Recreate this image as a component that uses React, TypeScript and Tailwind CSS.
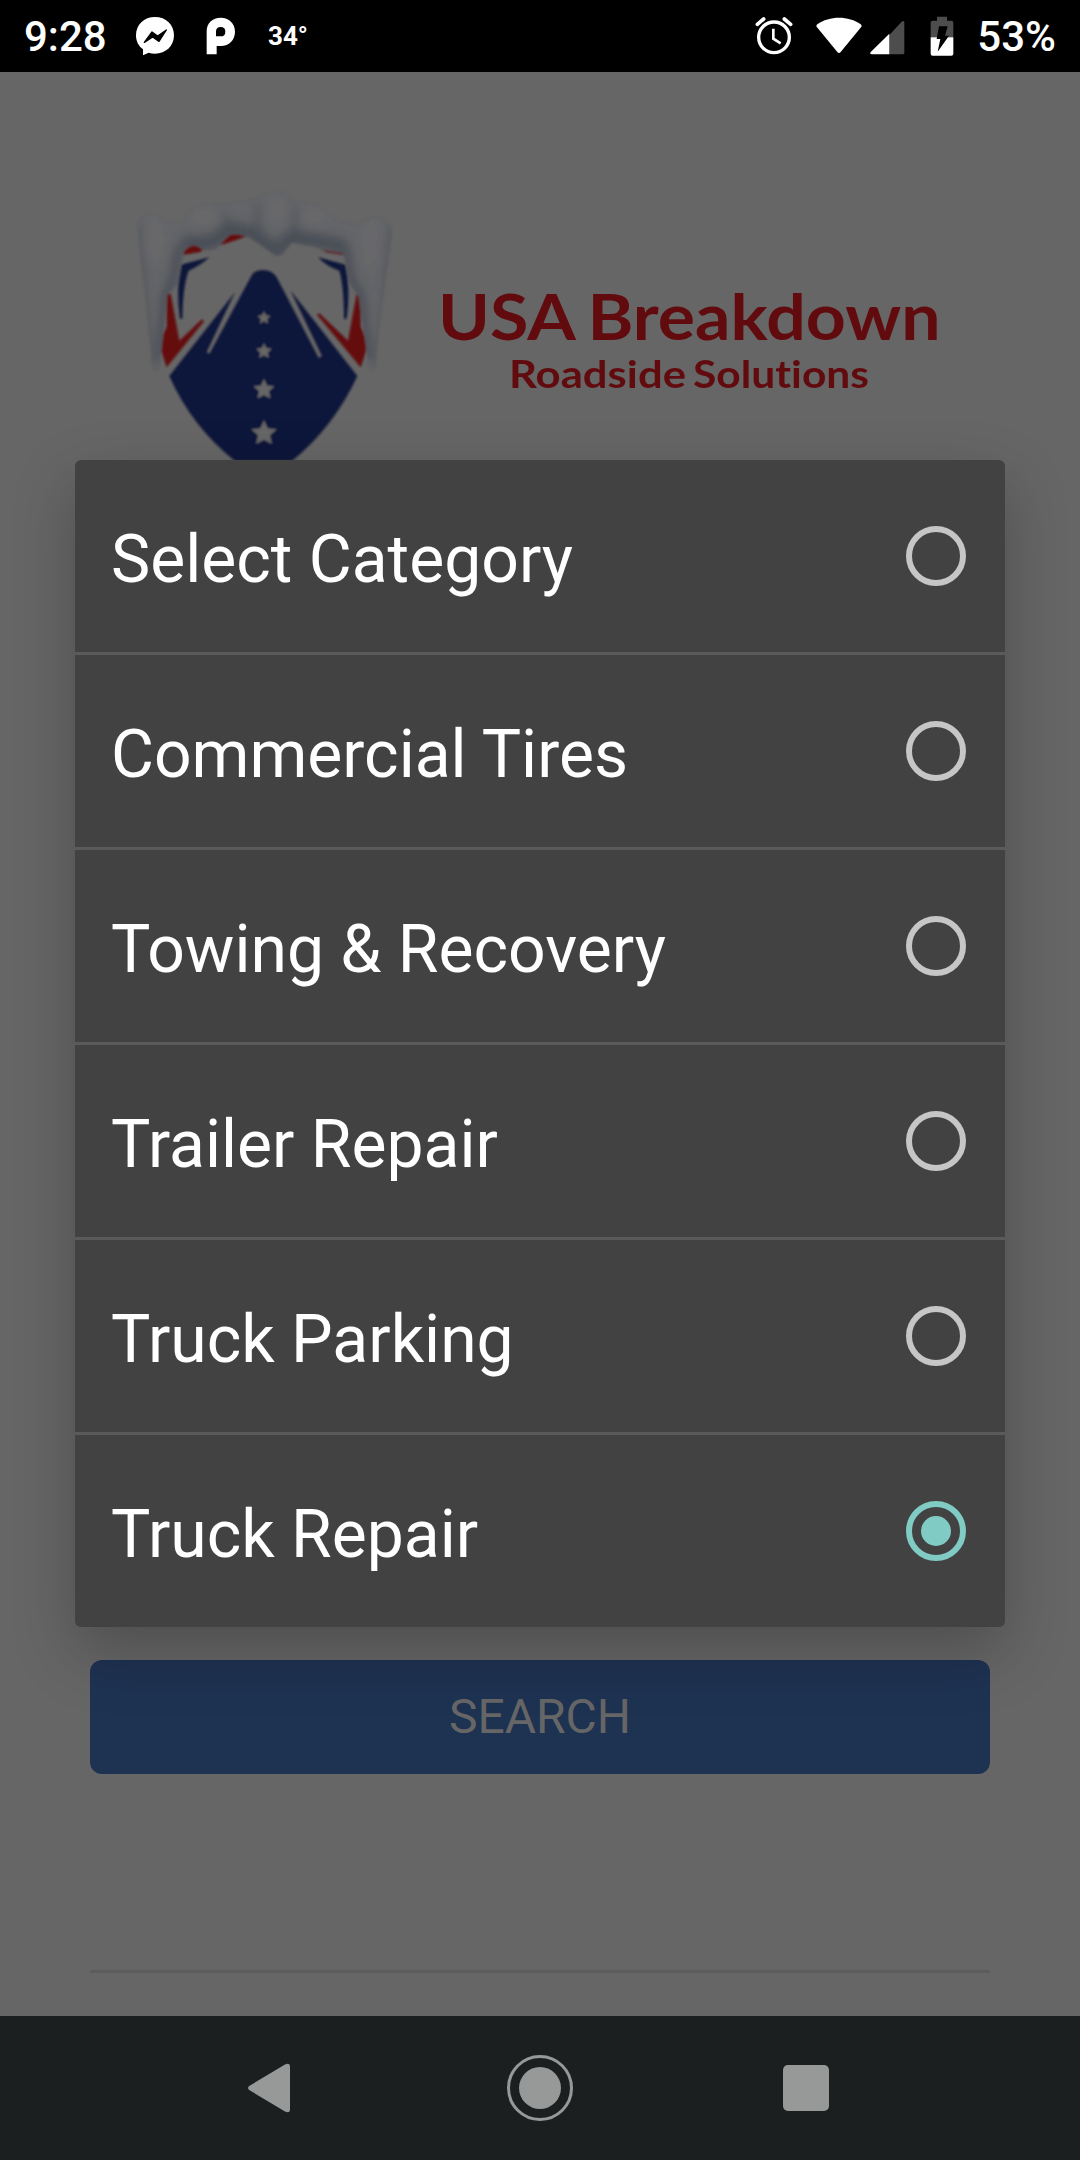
import React from "react";

const ROBOTO = "font-['Roboto',sans-serif]";

const options = [
  { label: "Select Category", selected: false },
  { label: "Commercial Tires", selected: false },
  { label: "Towing & Recovery", selected: false },
  { label: "Trailer Repair", selected: false },
  { label: "Truck Parking", selected: false },
  { label: "Truck Repair", selected: true },
];

function MessengerIcon() {
  return (
    <svg width="40" height="40" viewBox="0 0 120 120" fill="none">
      <path d="M60 3C27 3 3 26 3 58c0 18 8 33 21 42v18l17-8c6 2 12 3 19 3 33 0 57-23 57-55S93 3 60 3Z" fill="#fff" />
      <path d="M28 79 L51 48 L68 60 L94 42 L72 76 L53 63 Z" fill="#000" stroke="#000" strokeWidth="4" strokeLinejoin="round" />
    </svg>
  );
}

function PandoraIcon() {
  return (
    <svg width="30" height="38" viewBox="0 0 90 114" fill="none">
      <path fillRule="evenodd" d="M2 112V43C2 18 19 2 44 2s43 17 43 42-18 43-42 43H32v25ZM30 44q0-14 14-14t14 14-14 14H30Z" fill="#fff" />
    </svg>
  );
}

function AlarmIcon() {
  return (
    <svg width="38" height="38" viewBox="0 0 114 114" fill="none" stroke="#fff">
      <circle cx="57" cy="61" r="46" strokeWidth="10" />
      <path d="M7 22 26 6M107 22 88 6" strokeWidth="11" strokeLinecap="round" />
      <path d="M55 35v30l22 14" strokeWidth="8" />
    </svg>
  );
}

function WifiIcon() {
  return (
    <svg width="46" height="37" viewBox="0 0 138 111">
      <path d="M4 22C40-4 98-4 134 22q5 4 1 9L74 105q-5 6-10 0L3 31q-4-5 1-9Z" fill="#fff" />
    </svg>
  );
}

function SignalIcon() {
  return (
    <svg width="35" height="35" viewBox="0 0 105 105">
      <path d="M58 45 95 5q8-6 8 4v89q0 5-5 5H58Z" fill="#4d4d4d" />
      <path d="M58 41v62H6q-9-1-3-8Z" fill="#fff" />
    </svg>
  );
}

function BatteryIcon() {
  return (
    <svg width="24" height="40" viewBox="0 0 72 120">
      <path d="M21 2h30v12h13q6 0 6 6v44H2V20q0-6 6-6h13Z" fill="#4d4d4d" />
      <path d="M2 64h68v49q0 6-6 6H8q-6 0-6-6Z" fill="#fff" />
      <path d="M27 31h26l-8 28h12L23 107l8-38H20Z" fill="#000" />
    </svg>
  );
}

function StatusBar() {
  return (
    <header className="flex h-[72px] w-full items-center justify-between bg-black pl-6 pr-[24px] text-white">
      <div className="flex items-center">
        <span className="w-[82px] whitespace-nowrap pt-[2px] text-[42px] font-medium leading-[72px]">9:28</span>
        <div className="ml-[29px]"><MessengerIcon /></div>
        <div className="ml-[31px]"><PandoraIcon /></div>
        <span className="ml-[32px] whitespace-nowrap text-[26px] font-bold leading-[72px]">34°</span>
      </div>
      <div className="flex items-center">
        <AlarmIcon />
        <div className="ml-[23px] pb-[2px]"><WifiIcon /></div>
        <div className="ml-[8px] pt-[2px]"><SignalIcon /></div>
        <div className="ml-[25px] pb-[1px]"><BatteryIcon /></div>
        <span className="ml-[23px] whitespace-nowrap pt-[2px] text-[42px] font-medium leading-[72px]">53%</span>
      </div>
    </header>
  );
}

function Star({ cx, cy, r }: { cx: number; cy: number; r: number }) {
  const points = Array.from({ length: 10 }, (_, i) => {
    const radius = i % 2 ? r * 0.48 : r;
    const a = -Math.PI / 2 + (i * Math.PI) / 5;
    return `${cx + radius * Math.cos(a)},${cy + radius * Math.sin(a)}`;
  }).join(" ");
  return <polygon points={points} fill="#666" />;
}

const ICE =
  "M82 165Q86 138 124 131 150 134 166 150L214 160Q236 112 290 102 312 98 334 106 352 92 400 94L444 84Q462 66 500 66 536 66 556 98 574 88 600 100 640 108 660 138 690 152 728 166L752 158Q776 138 812 142 848 152 845 190L826 330 806 480 796 596Q786 606 776 596L764 500 746 380 718 340 700 250 640 240 610 230 545 218 520 250Q504 266 486 250L420 204Q392 190 360 194 340 212 322 234 300 246 276 238 250 212 222 244L205 340 172 376 160 490 148 596Q138 608 128 596L108 400 92 260Z";

function ShieldLogo() {
  return (
    <svg className="block shrink-0" width="310" height="300" viewBox="0 0 930 900">
      <defs>
        <filter id="soft" x="-5%" y="-5%" width="110%" height="110%">
          <feGaussianBlur stdDeviation="2.6" />
        </filter>
        <filter id="shade" filterUnits="userSpaceOnUse" x="0" y="0" width="930" height="900">
          <feGaussianBlur stdDeviation="15" />
        </filter>
        <clipPath id="ice">
          <path d={ICE} />
        </clipPath>
      </defs>
      <g filter="url(#soft)">
        <g fill="#650a0e">
          <path d="M218 255Q224 218 248 217L284 236 270 246Z" />
          <path d="M330 226Q342 192 366 190L420 194 385 208Z" />
          <path d="M612 226 640 224 708 238V256L650 247Z" />
          <path d="M170 370 182 372 208 512 276 448 282 454 170 592 147 522 170 470Z" />
          <path d="M752 370 740 372 714 512 628 430 621 434 752 592 775 522 752 470Z" />
          <path d="M106 340 112 400 108 390Z" />
        </g>
        <g fill="#10163a">
          <path d="M298 262 212 284Q198 360 210 446H217Q218 350 236 302 266 290 298 262Z" />
          <path d="M624 262 706 284Q722 360 710 446H702Q702 350 688 302 654 292 624 262Z" />
          <path d="M458 300Q486 300 500 322L626 564 636 558 542 362 742 618Q672 770 545 874H376Q245 770 178 618L374 368 290 546 298 552 424 318Q434 300 458 300Z" />
        </g>
        <Star cx={462} cy={444} r={21} />
        <Star cx={462} cy={544} r={25} />
        <Star cx={462} cy={659} r={33} />
        <Star cx={462} cy={790} r={40} />
        <g clipPath="url(#ice)">
          <path d={ICE} fill="#646568" />
          <g filter="url(#shade)" fill="none" stroke="#484d56" strokeLinecap="round">
            <path d="M232 220 276 222 318 212 360 176 424 190 500 244 545 202 610 212 690 228" strokeWidth="44" />
            <path d="M444 110V190M556 120V190" strokeWidth="12" />
            <path d="M336 124 350 160" strokeWidth="8" />
            <path d="M84 170 100 360 126 590" strokeWidth="12" />
            <path d="M206 240 190 330 166 380 152 560" strokeWidth="26" />
            <path d="M846 170 828 360 802 590" strokeWidth="12" />
            <path d="M704 230 722 330 752 380 772 560" strokeWidth="26" />
          </g>
          <g filter="url(#shade)" fill="#67686a">
            <ellipse cx="500" cy="120" rx="28" ry="44" />
            <ellipse cx="280" cy="138" rx="44" ry="26" />
            <ellipse cx="612" cy="138" rx="38" ry="26" />
            <ellipse cx="136" cy="210" rx="26" ry="80" />
            <ellipse cx="782" cy="220" rx="26" ry="80" />
          </g>
        </g>
        <path d={ICE} fill="none" stroke="#51555b" strokeOpacity="0.3" strokeWidth="3" />
      </g>
    </svg>
  );
}

function BrandName() {
  return (
    <svg
      className="block shrink-0 overflow-visible blur-[0.6px] [font-variant-ligatures:none]"
      width="520"
      height="140"
      viewBox="430 260 520 140"
      fill="#620b0f"
      fontFamily="Lato, sans-serif"
      fontWeight="700"
    >
      <g fontSize="64">
        <text x="438" y="340" textLength="138" lengthAdjust="spacingAndGlyphs">USA</text>
        <text x="587.5" y="340" textLength="353" lengthAdjust="spacingAndGlyphs">Breakdown</text>
      </g>
      <g fontSize="38.5">
        <text x="509" y="387.5" textLength="177" lengthAdjust="spacingAndGlyphs">Roadside</text>
        <text x="693" y="387.5" textLength="176" lengthAdjust="spacingAndGlyphs">Solutions</text>
      </g>
    </svg>
  );
}

function Radio({ selected }: { selected: boolean }) {
  return selected ? (
    <span className="flex size-[60px] items-center justify-center rounded-full border-[6px] border-[#80cbc4]">
      <span className="size-[30px] rounded-full bg-[#80cbc4]" />
    </span>
  ) : (
    <span className="size-[60px] rounded-full border-[6px] border-[#c6c6c6]" />
  );
}

function CategoryDialog() {
  return (
    <div className="absolute inset-0 flex items-start justify-center overflow-hidden pt-[388px]">
      <ul className="w-[930px] rounded-[6px] bg-[#424242] shadow-[0_24px_64px_rgba(0,0,0,0.24)]">
        {options.map((o) => (
          <li
            key={o.label}
            className="box-content flex h-[192px] items-center justify-between border-b-[3px] border-[#5a5a5a] pl-[36px] pr-[39px] last:border-b-0"
          >
            <span className="pt-[8px] text-[66px] leading-[78px] text-white">{o.label}</span>
            <Radio selected={o.selected} />
          </li>
        ))}
      </ul>
    </div>
  );
}

function NavBar() {
  return (
    <nav className="flex h-[144px] items-center bg-[#1c1f20] pl-[246px]">
      <svg width="46" height="54" viewBox="0 0 46 54">
        <path d="M4 24.5 39 3.5Q44 1 44 6v42q0 5-5 2.5L4 29.5Q0 27 4 24.5Z" fill="#979998" />
      </svg>
      <svg className="ml-[214px]" width="68" height="68" viewBox="0 0 68 68">
        <circle cx="34" cy="34" r="31.5" fill="none" stroke="#979998" strokeWidth="3" />
        <circle cx="34" cy="34" r="21" fill="#979998" />
      </svg>
      <span className="ml-[209px] size-[46px] rounded-[5px] bg-[#979998]" />
    </nav>
  );
}

export default function App() {
  return (
    <div className={`flex h-[2160px] w-[1080px] flex-col overflow-hidden ${ROBOTO}`}>
      <StatusBar />
      <main className="relative flex h-[1944px] flex-col bg-[#666]">
        <div className="flex h-[398px] items-start pl-[110px] pt-[98px]">
          <ShieldLogo />
          <div className="ml-[10px] pt-[90px]"><BrandName /></div>
        </div>
        <div className="mt-[1190px] px-[90px]">
          <button className="block h-[114px] w-full rounded-[12px] bg-[#1e3252] text-center text-[48px] leading-[112px] text-[#666]">
            SEARCH
          </button>
          <hr className="mt-[196px] border-t-[3px] border-[#5c5c5c]" />
        </div>
        <CategoryDialog />
      </main>
      <NavBar />
    </div>
  );
}
